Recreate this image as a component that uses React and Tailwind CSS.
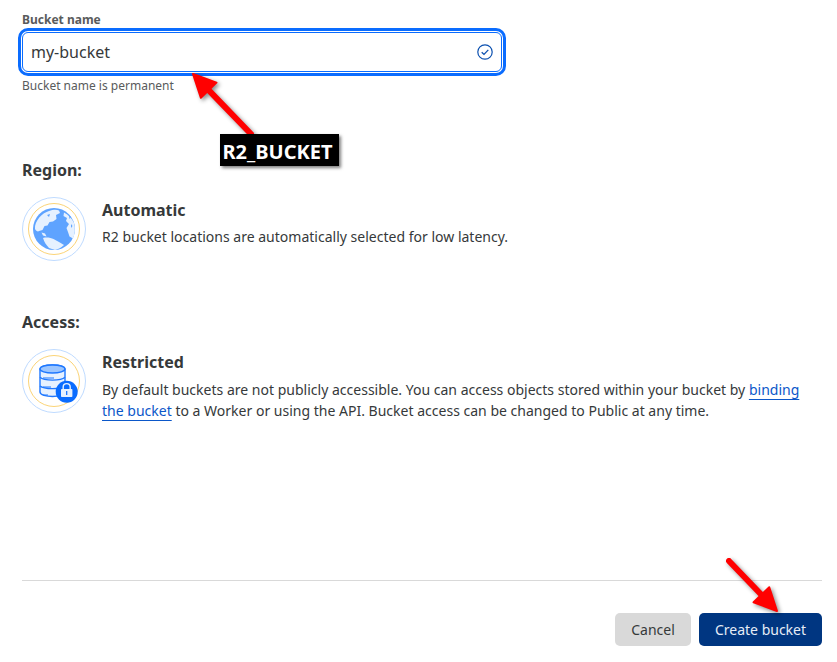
const font = { fontFamily: '"Noto Sans", sans-serif' };

function Rings({ children }) {
  return (
    <svg width="64" height="64" viewBox="0 0 64 64" className="shrink-0">
      <circle cx="32" cy="32" r="31.5" fill="none" stroke="#bfdbff" strokeWidth="1" />
      <circle cx="32" cy="32" r="25.5" fill="none" stroke="#fbd477" strokeWidth="1" />
      {children}
    </svg>
  );
}

function Globe() {
  return (
    <Rings>
      <circle cx="32" cy="32" r="21" fill="#5ea3ff" />
      <path d="M17.3 20.5 C20 17 24 15 27 14 C31 12.5 35 12.5 37 13.5 L38 16 L34 18 L34.5 22 L31 24.5 L27.5 25 L25.5 28.5 L22.5 29 L20.5 33 L17 34 C16 35 14 34 13 32 C12.5 28 14.5 24 17.3 20.5 Z" fill="#e6f1ff" />
      <path d="M42 15.5 C46.5 18 50 21.5 52 26 C53.5 31 53 37 51 41.5 L47.5 39.5 L46 35 L44.5 31 L47 27 L44 24 L45 21 L41.5 19 Z" fill="#e6f1ff" />
      <path d="M21 41 C25 40 29 41 31.5 42 L37 45 L42 48 C39.5 50.5 36 52.5 33 53 L27 51 C24.5 48 22 45 21 41 Z" fill="#e6f1ff" />
      <path d="M19.5 35.5 L23 36.5 L24.5 39.5 L21 38.5 Z" fill="#e6f1ff" />
      <path d="M47 18 L49 20 L47.5 22 Z M49 27 L50.5 29 L49 31 Z M25 18 L28 17 L27 20 Z" fill="#5ea3ff" />
    </Rings>
  );
}

function Database() {
  return (
    <Rings>
      <path d="M18 20 C18 14.5 43 14.5 43 20 V43 C43 49 18 49 18 43 Z" fill="#e6f1ff" stroke="#1f78ff" strokeWidth="1.4" />
      <ellipse cx="30.5" cy="20" rx="12.5" ry="4" fill="#9cc6ff" stroke="#1f78ff" strokeWidth="1.4" />
      <path d="M18 28.3 C22 32 39 32 43 28.3 M18 37 C22 40.5 39 40.5 43 37" fill="none" stroke="#1f78ff" strokeWidth="1.4" />
      <path d="M21 29 H32 M21 38 H29 M21 46 H26" stroke="#1f78ff" strokeWidth="1.2" />
      <circle cx="44.7" cy="42.7" r="11" fill="#0a6cff" />
      <rect x="39" y="40" width="11.4" height="8" rx="0.8" fill="#e6f1ff" />
      <path d="M41.2 40 V38 C41.2 33.5 48.2 33.5 48.2 38 V40" fill="none" stroke="#e6f1ff" strokeWidth="1.4" />
      <rect x="44.1" y="42" width="1.2" height="4" fill="#0a6cff" />
    </Rings>
  );
}

function Arrow({ x1, y1, x2, y2 }) {
  // x1,y1 = tail, x2,y2 = tip
  const a = Math.atan2(y2 - y1, x2 - x1);
  const len = 25;
  const spread = 0.45;
  const p1 = [x2 - len * Math.cos(a - spread), y2 - len * Math.sin(a - spread)];
  const p2 = [x2 - len * Math.cos(a + spread), y2 - len * Math.sin(a + spread)];
  const nx = x2 - 18 * Math.cos(a);
  const ny = y2 - 18 * Math.sin(a);
  return (
    <svg width="837" height="662" viewBox="0 0 837 662" className="absolute left-0 top-0 drop-shadow-[2px_2px_2px_rgba(0,0,0,0.45)]">
      <line x1={x1} y1={y1} x2={nx} y2={ny} stroke="#ff0000" strokeWidth="6" strokeLinecap="round" />
      <polygon points={`${x2},${y2} ${p1[0]},${p1[1]} ${p2[0]},${p2[1]}`} fill="#ff0000" stroke="#ff0000" strokeWidth="2" strokeLinejoin="round" />
    </svg>
  );
}

export default function App() {
  return (
    <div className="relative w-[837px] h-[662px] overflow-hidden bg-white pl-[22px] pr-[15px] pt-[12px] text-[#36393a]" style={font}>
      <label className="block text-[12px] leading-[15px] font-bold text-[#595b5c]">Bucket name</label>
      <div className="mt-[1px] -ml-[4px] w-[488px] h-[48px] rounded-[10px] border-[3px] border-[#0a6cff] p-[1px]">
        <div className="flex h-full items-center justify-between rounded-[6px] border border-[#0a6cff] pl-[8px] pr-[8px]">
          <span className="text-[16px] text-[#36393a]">my-bucket</span>
          <svg width="16" height="16" viewBox="0 0 16 16" fill="none" stroke="#0b50b0" strokeWidth="1.2">
            <circle cx="8" cy="8" r="7.2" />
            <path d="M4.7 8.2 L7 10.4 L11.3 5.9" strokeWidth="1.3" />
          </svg>
        </div>
      </div>
      <p className="mt-[2px] text-[12px] leading-[16px] text-[#595b5c]">Bucket name is permanent</p>

      <h3 className="mt-[65px] text-[16px] leading-[22px] font-bold">Region:</h3>
      <div className="mt-[16px] flex gap-[16px]">
        <Globe />
        <div className="pt-[2px]">
          <div className="text-[16px] leading-[22px] font-bold">Automatic</div>
          <p className="mt-[5px] text-[14.03px] leading-[21px]">R2 bucket locations are automatically selected for low latency.</p>
        </div>
      </div>

      <h3 className="mt-[50px] text-[16px] leading-[22px] font-bold">Access:</h3>
      <div className="mt-[16px] flex gap-[16px]">
        <Database />
        <div className="pt-[2px]">
          <div className="text-[16px] leading-[22px] font-bold">Restricted</div>
          <p className="mt-[6px] w-[705px] text-[14.03px] leading-[21px]">
            By default buckets are not publicly accessible. You can access objects stored within your bucket by{" "}
            <a className="text-[#0b57c9] underline underline-offset-[4px]">binding the bucket</a> to a Worker or using the API. Bucket access can be changed to Public at any time.
          </p>
        </div>
      </div>

      <div className="mt-[159px] border-t border-[#d9d9d9] flex justify-end gap-[8px] pt-[32px]">
        <button className="h-[33px] w-[76px] rounded-[5px] bg-[#d9d9d9] text-[14px] text-[#36393a]">Cancel</button>
        <button className="h-[33px] w-[123px] rounded-[5px] bg-[#003681] text-[14px] text-[#e6edf7]">Create bucket</button>
      </div>

      {/* annotations laid over the form */}
      <Arrow x1={251} y1={134} x2={193} y2={74} />
      <Arrow x1={729} y1={561} x2={777} y2={611} />
      <div className="absolute left-[220px] top-[134px] w-[119px] h-[32px] flex items-center justify-center bg-black text-white text-[20px] leading-[36px] pt-[4px] pr-[4px] font-bold shadow-[2px_2px_3px_rgba(0,0,0,0.5)]">R2_BUCKET</div>
    </div>
  );
}
